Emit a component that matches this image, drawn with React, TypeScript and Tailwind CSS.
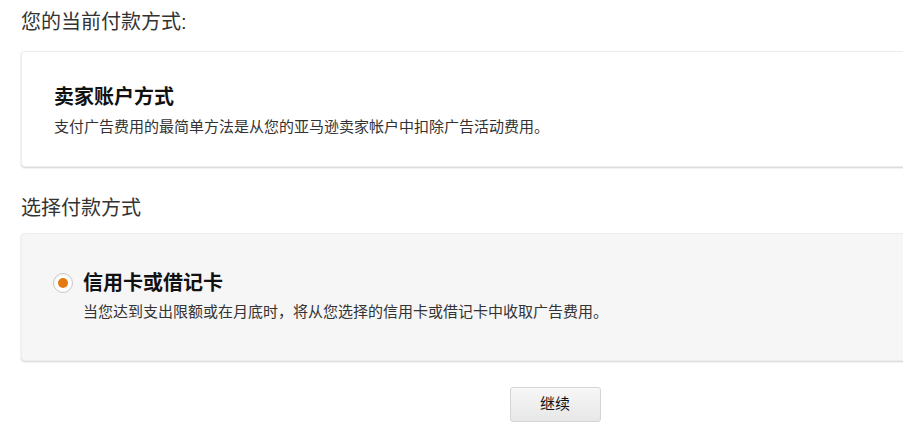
import React from "react";

export default function App() {
  return (
    <div
      className="w-[903px] h-[445px] overflow-hidden bg-white text-[#111]"
      style={{ fontFamily: '"Liberation Sans", "Noto Sans CJK SC", sans-serif' }}
    >
      <div className="w-[1068px] ml-[21px] pt-[8px]">
        {/* Current method */}
        <h2 className="text-[20px] leading-[28px] text-[#333]">您的当前付款方式:</h2>
        <div className="mt-[15px] h-[116px] rounded-[4px] border border-[#eee] bg-white shadow-[0_1px_2px_rgba(0,0,0,0.18)] pt-[33px] pl-[32px]">
          <div className="text-[20px] leading-[24px] font-bold text-[#111]">卖家账户方式</div>
          <div className="text-[15px] leading-[20px] text-[#333] mt-[8px]">
            支付广告费用的最简单方法是从您的亚马逊卖家帐户中扣除广告活动费用。
          </div>
        </div>

        {/* Choose method */}
        <h2 className="mt-[27px] text-[20px] leading-[28px] text-[#333]">选择付款方式</h2>
        <div className="mt-[11px] h-[128px] rounded-[4px] border border-[#eee] bg-[#f6f6f6] shadow-[0_1px_2px_rgba(0,0,0,0.18)] pt-[37px] pl-[31px]">
          <div className="flex items-center gap-[10px]">
            <span className="w-[20px] h-[20px] rounded-full border border-[#c8c8c8] bg-white flex items-center justify-center shadow-[inset_0_1px_2px_rgba(0,0,0,0.08)]">
              <span className="w-[10px] h-[10px] rounded-full bg-[#e47911]" />
            </span>
            <span className="text-[20px] leading-[24px] font-bold text-[#111]">信用卡或借记卡</span>
          </div>
          <div className="text-[15px] leading-[20px] text-[#333] mt-[7px] pl-[30px]">
            当您达到支出限额或在月底时，将从您选择的信用卡或借记卡中收取广告费用。
          </div>
        </div>

        {/* Continue */}
        <div className="flex justify-center mt-[26px]">
          <button className="w-[91px] h-[35px] rounded-[3px] border border-[#d5d5d5] bg-gradient-to-b from-[#f7f7f7] to-[#e7e7e7] text-[15px] text-[#111] shadow-[0_1px_0_rgba(255,255,255,0.6)_inset]">
            继续
          </button>
        </div>
      </div>
    </div>
  );
}
